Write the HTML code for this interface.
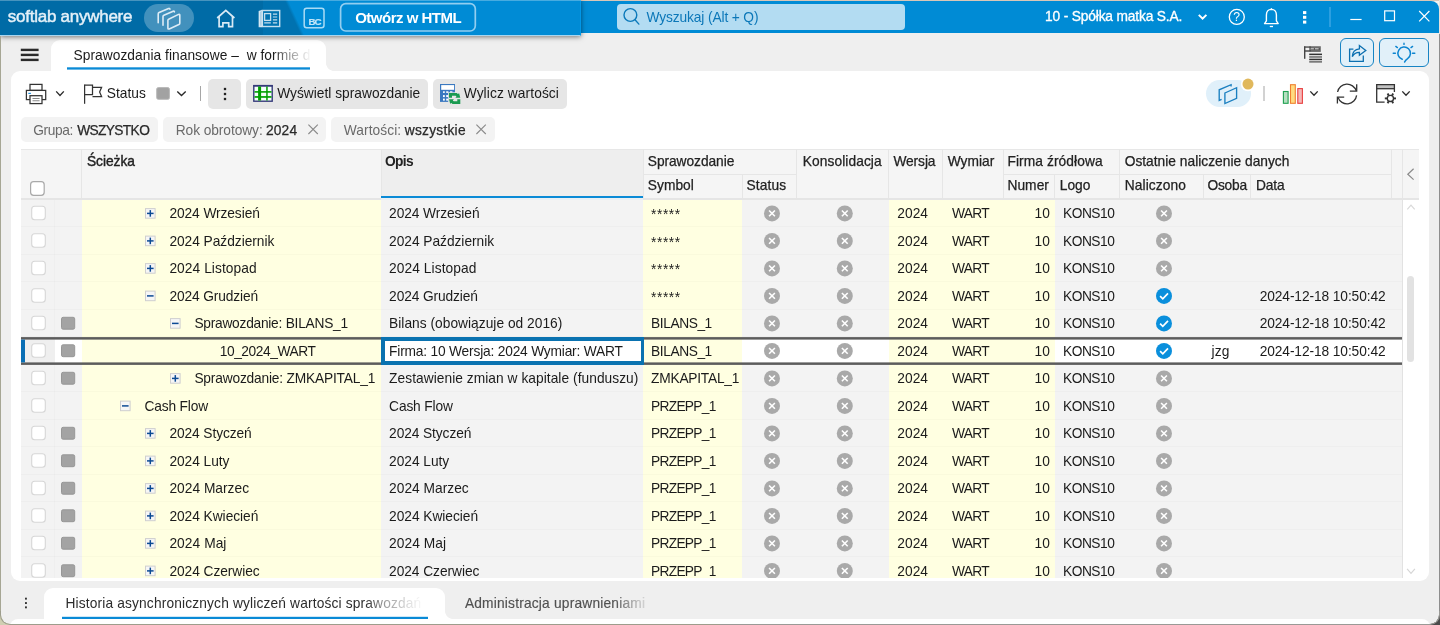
<!DOCTYPE html>
<html><head><meta charset="utf-8"><title>Sprawozdania finansowe</title>
<style>
html,body{margin:0;padding:0}
body{width:1440px;height:625px;overflow:hidden;position:relative;background:#efefef;font-family:"Liberation Sans",sans-serif;}
div{position:absolute;}
span{position:absolute;white-space:pre;line-height:normal;}
svg{position:absolute;left:0;top:0;}
</style></head><body>
<div style="left:1425px;top:0;width:15px;height:12px;background:#f2f0ee"></div>
<div style="left:0px;top:0px;width:1440px;height:1px;background:#d9c7b8;"></div>
<div style="left:0px;top:1px;width:1439px;height:32.3px;background:#008bd5;border-top-right-radius:8px;"></div>
<div style="left:0px;top:0px;width:579.5px;height:34.8px;background:linear-gradient(90deg,#006ba6 0,#006ba6 262.5px,rgba(0,107,166,0) 263.5px),linear-gradient(65deg,#0072b0 0,#0072b0 272.8px,#008bd5 275.8px,#008bd5 100%);box-shadow:0 1px 5px 0 rgba(0,0,0,.5);border-bottom:1.6px solid #a9d6f0;border-right:1.3px solid #0097e8;box-sizing:content-box;z-index:3;"></div>
<div style="left:0;top:0;width:581px;height:1px;background:rgba(255,255,255,.28);z-index:4"></div>
<div style="left:144.3px;top:4.2px;width:49.5px;height:27.4px;background:rgba(255,255,255,.26);border-radius:14px;z-index:4;"></div>
<div style="left:617px;top:4px;width:288px;height:26px;background:#b3dcf2;border-radius:4px;"></div>
<div style="left:1329.3px;top:7px;width:1.7px;height:20px;background:#2c9fe0;"></div>
<div style="left:0px;top:36px;width:1px;height:589px;background:#a6a694;z-index:9;"></div>
<div style="left:1439px;top:0px;width:1px;height:34px;background:#e6e1dc;z-index:9;"></div>
<div style="left:1439px;top:34px;width:1px;height:591px;background:#8e8e8e;z-index:9;"></div>
<div style="left:51px;top:39.8px;width:275px;height:31.5px;background:#fff;border-radius:9px 9px 0 0;"></div>
<div style="left:326px;top:63.3px;width:8px;height:8px;background:radial-gradient(circle at 100% 0,#efefef 7.6px,#fff 8.2px)"></div>
<div style="left:11px;top:71px;width:1418px;height:510px;background:#fff;border-radius:9px;"></div>
<div style="left:43.7px;top:588px;width:401.5px;height:31.3px;background:#fff;border-radius:9px 9px 0 0;"></div>
<div style="left:445.2px;top:611.3px;width:8px;height:8px;background:radial-gradient(circle at 100% 0,#efefef 7.6px,#fff 8.2px)"></div>
<div style="left:10px;top:619.2px;width:1420px;height:8px;background:#fff;border-radius:9px 9px 0 0;"></div>
<div style="left:0;top:611px;width:720px;height:14px;z-index:10;background:transparent;overflow:hidden"><div style="position:absolute;left:1px;top:-20px;width:1437.6px;height:32.6px;border-radius:0 0 9px 9px;box-shadow:0 0 0 1px #9d9d8c,0 0 0 30px #cfcfb2"></div></div>
<div style="left:720px;top:611px;width:720px;height:14px;z-index:10;background:transparent;overflow:hidden"><div style="position:absolute;left:-719px;top:-20px;width:1437.6px;height:32.6px;border-radius:0 0 9px 9px;box-shadow:0 0 0 1px #9a9a96,0 0 0 30px #4a4a4a"></div></div>
<div style="left:208.2px;top:79.3px;width:32.6px;height:29.4px;background:#e6e6e6;border-radius:5px;"></div>
<div style="left:246px;top:79.3px;width:182px;height:29.6px;background:#e6e6e6;border-radius:5px;"></div>
<div style="left:433px;top:79.3px;width:134px;height:29.6px;background:#e6e6e6;border-radius:5px;"></div>
<div style="left:200px;top:86.2px;width:1px;height:14.6px;background:#a6a6a6;"></div>
<div style="left:21.2px;top:117px;width:136.8px;height:25px;background:#f3f3f3;border-radius:5px;"></div>
<div style="left:163px;top:117px;width:162.8px;height:25px;background:#f3f3f3;border-radius:5px;"></div>
<div style="left:331.2px;top:117px;width:163.8px;height:25px;background:#f3f3f3;border-radius:5px;"></div>
<div style="left:1205.9px;top:79.9px;width:45.1px;height:27px;background:#e0f0fa;border-radius:14px;"></div>
<div style="left:1263.3px;top:86px;width:1.4px;height:15px;background:#d2d2d2;"></div>
<div style="left:1339.9px;top:38.1px;width:34.1px;height:28.7px;background:#e1f0f9;border:1.1px solid #1784c4;border-radius:6px;box-sizing:border-box;"></div>
<div style="left:1378.9px;top:38.1px;width:50.1px;height:28.7px;background:#e1f0f9;border:1.1px solid #1784c4;border-radius:6px;box-sizing:border-box;"></div>
<div style="left:21px;top:149.3px;width:1398px;height:49.9px;background:#f5f5f5;border-top:1px solid #e7e7e7;box-sizing:border-box;"></div>
<div style="left:381px;top:150.3px;width:262px;height:48.9px;background:#eeeeee;"></div>
<div style="left:21px;top:198px;width:1398px;height:2px;background:#e5e5e5;z-index:2;"></div>
<div style="left:381px;top:196px;width:262px;height:2px;background:#0a8ad6;z-index:2;"></div>
<div style="left:381px;top:198px;width:262px;height:2px;background:#eaf0f4;z-index:2;"></div>
<div style="left:81px;top:149.3px;width:1px;height:49.9px;background:#e6e6e6;"></div>
<div style="left:380.5px;top:149.3px;width:1px;height:49.9px;background:#e6e6e6;"></div>
<div style="left:642.5px;top:149.3px;width:1px;height:49.9px;background:#e6e6e6;"></div>
<div style="left:741.5px;top:174.4px;width:1px;height:24.8px;background:#e6e6e6;"></div>
<div style="left:795.9px;top:149.3px;width:1px;height:49.9px;background:#e6e6e6;"></div>
<div style="left:888.1px;top:149.3px;width:1px;height:49.9px;background:#e6e6e6;"></div>
<div style="left:941.5px;top:149.3px;width:1px;height:49.9px;background:#e6e6e6;"></div>
<div style="left:1002.8px;top:149.3px;width:1px;height:49.9px;background:#e6e6e6;"></div>
<div style="left:1054.2px;top:174.4px;width:1px;height:24.8px;background:#e6e6e6;"></div>
<div style="left:1119.2px;top:149.3px;width:1px;height:49.9px;background:#e6e6e6;"></div>
<div style="left:1202.5px;top:174.4px;width:1px;height:24.8px;background:#e6e6e6;"></div>
<div style="left:1249.8px;top:174.4px;width:1px;height:24.8px;background:#e6e6e6;"></div>
<div style="left:1391px;top:149.3px;width:1px;height:49.9px;background:#e6e6e6;"></div>
<div style="left:1401.9px;top:149.3px;width:1px;height:49.9px;background:#e6e6e6;"></div>
<div style="left:643px;top:173.9px;width:153.4px;height:1px;background:#e6e6e6;"></div>
<div style="left:1003.3px;top:173.9px;width:116.4px;height:1px;background:#e6e6e6;"></div>
<div style="left:1119.7px;top:173.9px;width:271.8px;height:1px;background:#e6e6e6;"></div>
<div style="left:21px;top:199px;width:1381.4px;height:378.6px;overflow:hidden;background:none"><div style="left:0px;top:0px;width:1381.4px;height:385px;background:#f3f3f3;"></div><div style="left:60.5px;top:0px;width:299.5px;height:385px;background:#ffffe1;"></div><div style="left:622px;top:0px;width:99px;height:385px;background:#ffffe1;"></div><div style="left:867.6px;top:0px;width:53.4px;height:385px;background:#ffffe1;"></div><div style="left:921px;top:0px;width:61.3px;height:385px;background:#ffffe1;"></div><div style="left:982.3px;top:0px;width:51.4px;height:385px;background:#ffffe1;"></div><div style="left:0px;top:27px;width:1381.4px;height:1px;background:rgba(0,0,0,.018);"></div><div style="left:0px;top:54.5px;width:1381.4px;height:1px;background:rgba(0,0,0,.018);"></div><div style="left:0px;top:82px;width:1381.4px;height:1px;background:rgba(0,0,0,.018);"></div><div style="left:0px;top:109.5px;width:1381.4px;height:1px;background:rgba(0,0,0,.018);"></div><div style="left:0px;top:137px;width:1381.4px;height:1px;background:rgba(0,0,0,.018);"></div><div style="left:0px;top:164.5px;width:1381.4px;height:1px;background:rgba(0,0,0,.018);"></div><div style="left:0px;top:192px;width:1381.4px;height:1px;background:rgba(0,0,0,.018);"></div><div style="left:0px;top:219.5px;width:1381.4px;height:1px;background:rgba(0,0,0,.018);"></div><div style="left:0px;top:247px;width:1381.4px;height:1px;background:rgba(0,0,0,.018);"></div><div style="left:0px;top:274.5px;width:1381.4px;height:1px;background:rgba(0,0,0,.018);"></div><div style="left:0px;top:302px;width:1381.4px;height:1px;background:rgba(0,0,0,.018);"></div><div style="left:0px;top:329.5px;width:1381.4px;height:1px;background:rgba(0,0,0,.018);"></div><div style="left:0px;top:357px;width:1381.4px;height:1px;background:rgba(0,0,0,.018);"></div><div style="left:33.2px;top:0px;width:1px;height:385px;background:rgba(0,0,0,.015);"></div><div style="left:0px;top:137.5px;width:1381.4px;height:27.5px;background:#fff;"></div><div style="left:0px;top:137.5px;width:33.7px;height:27.5px;background:#efefef;"></div><div style="left:60.5px;top:137.5px;width:299.5px;height:27.5px;background:#ffffe1;"></div><div style="left:622px;top:137.5px;width:99px;height:27.5px;background:#ffffe1;"></div><div style="left:867.6px;top:137.5px;width:53.4px;height:27.5px;background:#ffffe1;"></div><div style="left:921px;top:137.5px;width:61.3px;height:27.5px;background:#ffffe1;"></div><div style="left:982.3px;top:137.5px;width:51.4px;height:27.5px;background:#ffffe1;"></div><svg width="1381.4" height="400" viewBox="21 199 1381.4 400"><rect x="21" y="337.1" width="1381.4" height="2.5" fill="#5c5c5c"/><rect x="21" y="362.4" width="1381.4" height="2.5" fill="#5c5c5c"/><rect x="21" y="339.6" width="4" height="22.8" fill="#0a6fb5"/></svg><div style="left:360px;top:138px;width:263px;height:28px;background:#fff;border:solid #0a72b0;border-width:4px 3px 4px 4px;box-sizing:border-box;"></div></div>
<div style="left:1402px;top:199.2px;width:0.9px;height:378.4px;background:#e2e2e2;"></div>
<div style="left:1407.2px;top:276px;width:7.3px;height:86px;background:#e2e2e2;border-radius:4px;"></div>
<svg width="1440" height="625" viewBox="0 0 1440 625" style="z-index:6"><g stroke="#dcecf6" stroke-width="1.6" fill="none" stroke-linejoin="round" stroke-linecap="round"><path d="M168.6 19.3 L178.6 14.4 Q179.8 13.9 179.8 15.2 L179.8 23.2 Q179.8 24.2 178.9 24.6 L169.2 28.9 Q167.9 29.4 167.9 28.1 L167.9 20.4 Q167.9 19.6 168.6 19.3Z"/><path d="M163 25.3 L163 16.6 Q163 15.6 163.9 15.2 L173.2 11.2 Q174.3 10.9 174.4 11.9"/><path d="M158.2 22.7 L158.2 14 Q158.2 13 159.1 12.6 L168.6 8.5 Q169.7 8.2 169.9 9.2"/></g><g stroke="#d9eaf5" stroke-width="1.7" fill="none" stroke-linejoin="miter"><path d="M217.2 18 L225.8 10.4 L234.4 18"/><path d="M219.1 16.6 L219.1 26.7 L222.9 26.7 L222.9 22.9 L228.7 22.9 L228.7 26.7 L232.5 26.7 L232.5 16.6"/></g><g stroke="#e6f2f9" fill="none" stroke-width="1.4" opacity=".85"><rect x="262.4" y="10.5" width="17.3" height="16"/><path d="M262.4 10.5 L259.3 11.6 L259.3 26.5 L262.4 26.5" /><rect x="264.6" y="13.6" width="6" height="6.8" stroke-width="1.3"/><path d="M272.9 14.2 H277.2 M272.9 17 H277.2 M272.9 19.8 H277.2 M264.2 22.8 H270.8 M272.9 22.8 H277.2" stroke-width="1.2"/></g><rect x="259.3" y="11.4" width="3.1" height="15.2" fill="#e6f2f9" opacity=".75"/><rect x="340.6" y="3.6" width="134.7" height="27.4" rx="5.2" stroke="#92cef0" stroke-width="1.7" fill="none"/><rect x="304.2" y="8.3" width="19.8" height="19.5" rx="2.5" stroke="#a9dbf5" stroke-width="1.5" fill="none"/><g stroke="#0b79ba" stroke-width="1.4" fill="none" stroke-linecap="round"><circle cx="630.4" cy="15" r="6.4"/><path d="M635 19.8 L638.9 24.1"/></g><path d="M1198.8 14.9 L1202.6 18.7 L1206.4 14.9" stroke="#fff" stroke-width="2" fill="none"/><circle cx="1236.8" cy="16.9" r="7.5" stroke="#fff" stroke-width="1.3" fill="none"/><g stroke="#fff" stroke-width="1.4" fill="none" stroke-linejoin="round"><path d="M1264.6 23.6 H1278.2 L1276.4 20.8 V15 Q1276.4 9.6 1271.4 9.4 Q1266.4 9.6 1266.4 15 V20.8 Z"/><path d="M1269.8 26.5 H1273" stroke-width="1.3"/><path d="M1271.4 9.4 V8.2"/></g><rect x="1303" y="11.1" width="3.3" height="3" fill="#fff"/><rect x="1303" y="15.8" width="3.3" height="3" fill="#fff"/><rect x="1303" y="20.6" width="3.3" height="3" fill="#fff"/><path d="M1350.3 19.5 H1361.6" stroke="#fff" stroke-width="1.2"/><rect x="1384.7" y="10.9" width="9.8" height="9.8" stroke="#fff" stroke-width="1.2" fill="none"/><path d="M1419.2 11 L1429.4 21.3 M1429.4 11 L1419.2 21.3" stroke="#fff" stroke-width="1.2"/><rect x="67" y="67.3" width="243" height="2.3" fill="#0a8ad6"/><rect x="62" y="616.8" width="366" height="2.2" fill="#0a8ad6"/><rect x="20.8" y="48.699999999999996" width="17.8" height="2.4" fill="#2b2b2b"/><rect x="20.8" y="53.699999999999996" width="17.8" height="2.4" fill="#2b2b2b"/><rect x="20.8" y="58.699999999999996" width="17.8" height="2.4" fill="#2b2b2b"/><g fill="#444"><rect x="1304" y="46.4" width="16.8" height="1.3"/><rect x="1304" y="46.4" width="1.4" height="12.4"/><rect x="1304" y="50.3" width="16.8" height="1.4"/><rect x="1309.4" y="46.4" width="1.3" height="5"/><rect x="1310.7" y="47.7" width="10" height="2.6" fill="#555"/><rect x="1310.9" y="48.3" width="3" height="1" fill="#ddd"/><rect x="1315" y="48.3" width="3.6" height="1" fill="#ddd"/><rect x="1309.2" y="53.6" width="12.8" height="1.5" fill="#333"/><rect x="1309.2" y="56.1" width="12.8" height="1.7" fill="#7a7a7a"/><rect x="1309.2" y="58.7" width="12.8" height="1.5" fill="#333"/><rect x="1309.2" y="61" width="12.8" height="1.7" fill="#7a7a7a"/></g><g stroke="#0b6fb0" stroke-width="1.3" fill="none"><path d="M1353.4 49.1 H1349.6 V61.3 H1363.3 V55.4"/><path d="M1352.3 56.6 Q1352.6 49.4 1359.4 48.8 V45.6 L1365.8 50.4 L1359.4 55.3 V52.3 Q1354.6 52.2 1352.3 56.6Z" stroke-linejoin="miter"/></g><g stroke="#0b84d0" stroke-width="1.5" fill="none" stroke-linecap="round"><path d="M1402.2 59.3 A6.3 6.3 0 1 1 1407.6 58.6 Q1405.4 60 1404.6 62.1"/><path d="M1404 43.2 V44.4 M1393.2 53.3 H1395.4 M1412.5 53.3 H1414.8 M1395.8 46.4 L1397.4 47.6 M1412.6 46.4 L1411 47.6" stroke-width="1.4"/></g><g stroke="#333" stroke-width="1.25" fill="#fff"><rect x="30" y="84.4" width="12" height="6"/><rect x="26.4" y="90.4" width="19.3" height="9.2"/><rect x="30" y="95.7" width="12" height="7.9"/><path d="M32.5 98.5 H39.6 M32.5 100.8 H39.6" stroke="#8a8a8a" stroke-width="1.1"/></g><rect x="28.3" y="92.8" width="2.6" height="1.2" fill="#1a8fe0"/><path d="M56.2 91.4 L60.0 95.4 L63.8 91.4" stroke="#2a2a2a" stroke-width="1.35" fill="none"/><path d="M177.3 91.4 L181.5 95.6 L185.7 91.4" stroke="#2a2a2a" stroke-width="1.35" fill="none"/><path d="M1310.3 91.4 L1314.0 95.3 L1317.7 91.4" stroke="#2a2a2a" stroke-width="1.35" fill="none"/><path d="M1402.3 91.4 L1406.0 95.3 L1409.7 91.4" stroke="#2a2a2a" stroke-width="1.35" fill="none"/><g stroke="#333" stroke-width="1.25" fill="none"><path d="M84.6 84.5 V103.8"/><path d="M84.6 85.1 H92.5 V94.5 H84.6"/><path d="M92.5 87.3 H101.6 L99.6 92 L101.6 96.6 H92.5"/></g><rect x="156.7" y="87.6" width="12.7" height="11.7" rx="1.6" fill="#a2a2a2" stroke="#b8b8b8" stroke-width="1"/><rect x="223.85" y="87.85" width="2.3" height="2.3" fill="#222"/><rect x="223.85" y="92.85" width="2.3" height="2.3" fill="#222"/><rect x="223.85" y="97.85" width="2.3" height="2.3" fill="#222"/><rect x="253.8" y="85.8" width="18.4" height="15.4" fill="#f4fffa" stroke="#363a7a" stroke-width="1.4"/><rect x="253.2" y="84.9" width="19.6" height="1.6" fill="#363a7a"/><g fill="#00a000"><rect x="258.1" y="86.5" width="3" height="14"/><rect x="266.2" y="86.5" width="1.5" height="14"/><rect x="254.5" y="91.1" width="17" height="1.6"/><rect x="254.5" y="96.1" width="17" height="1.7"/></g><rect x="440" y="84" width="15" height="17.9" fill="#3a78c0"/><rect x="441.2" y="85.1" width="12.9" height="4.7" fill="#fff"/><g fill="#fff"><rect x="443" y="91.3" width="1.8" height="1.6"/><rect x="446.2" y="91.3" width="2.2" height="1.6"/><rect x="450" y="91.3" width="2.4" height="1.3"/><rect x="443" y="95.1" width="1.8" height="2"/><rect x="446.2" y="95.1" width="2.2" height="2"/><rect x="443" y="98.6" width="1.8" height="2"/><rect x="446.2" y="98.6" width="2.2" height="2"/></g><rect x="448.2" y="92.3" width="12.6" height="12.2" fill="#e6e6e6"/><g fill="#1a9a50" stroke="none"><path d="M449 93 H456.8 L457.9 94.1 L459.1 93.2 L460.3 97.7 H455.4 L456.5 96.6 L455.6 95.7 H452 V97.7 H449Z"/><path d="M460.3 104 H452.5 L451.4 102.9 L450.2 103.8 L449 99.3 H453.9 L452.8 100.4 L453.7 101.3 H457.3 V99.3 H460.3Z"/></g><path d="M308.4 124.6 L317.8 134 M317.8 124.6 L308.4 134" stroke="#8a8a8a" stroke-width="1.1"/><path d="M476.4 124.6 L485.8 134 M485.8 124.6 L476.4 134" stroke="#8a8a8a" stroke-width="1.1"/><g stroke="#1a7fc0" stroke-width="1.35" fill="none" stroke-linejoin="miter"><path d="M1224.9 93 L1236.6 87.7 V98.3 L1224.9 103.5Z"/><path d="M1221.6 99.4 L1219.2 100.4 V89.8 L1231.1 84.7 V86.6"/></g><circle cx="1248" cy="84.1" r="7.2" fill="#fff"/><circle cx="1248" cy="84.1" r="5.5" fill="#e0b85c"/><rect x="1283.4" y="91.5" width="4.7" height="11.8" fill="#b5dfc0" stroke="#1ea050" stroke-width="1.1"/><rect x="1290.5" y="84.7" width="4.8" height="18.6" fill="#ffdc80" stroke="#f08030" stroke-width="1.1"/><rect x="1297.8" y="88.6" width="4.6" height="14.7" fill="#f5b8b8" stroke="#e84040" stroke-width="1.1"/><g stroke="#333" stroke-width="1.3" fill="none"><path d="M1337.6 92 A9.6 9.6 0 0 1 1356.2 90.9"/><path d="M1356.7 84.2 V91.1 H1349.8"/><path d="M1356.6 95.4 A9.6 9.6 0 0 1 1338 97.4"/><path d="M1337.4 103.6 V97.2 H1344.2"/></g><rect x="1376.6" y="84.6" width="17.8" height="4" fill="#c2c2c2"/><g stroke="#333" stroke-width="1.3" fill="none"><path d="M1384.6 102.1 H1376.7 V84.7 H1394.4 V92"/><path d="M1376.7 88.7 H1394.4"/><circle cx="1390.4" cy="98.4" r="3.1"/></g><g stroke="#333" stroke-width="1.9"><path d="M1393.80 98.40 L1396.00 98.40"/><path d="M1387.00 98.40 L1384.80 98.40"/><path d="M1392.10 101.34 L1393.20 103.25"/><path d="M1388.70 101.34 L1387.60 103.25"/><path d="M1392.10 95.46 L1393.20 93.55"/><path d="M1388.70 95.46 L1387.60 93.55"/></g><rect x="30.6" y="181.7" width="13.6" height="13.6" rx="3" fill="#fff" stroke="#a9a9a9" stroke-width="1.2"/><path d="M1413.6 168.8 L1407.8 174.2 L1413.6 179.6" stroke="#8a8a8a" stroke-width="1.2" fill="none"/><path d="M1407.3 209.4 L1411 205.2 L1414.7 209.4" stroke="#d9d9d9" stroke-width="1.2" fill="none"/><path d="M1407.1 568.8 L1411 573.4 L1414.9 568.8" stroke="#d6d6d6" stroke-width="1.2" fill="none"/><rect x="25" y="597.7" width="1.9" height="1.9" fill="#333"/><rect x="25" y="602.1" width="1.9" height="1.9" fill="#333"/><rect x="25" y="606.4" width="1.9" height="1.9" fill="#333"/></svg>
<div style="left:21px;top:199px;width:1381.4px;height:378.6px;overflow:hidden;z-index:7;will-change:transform"><svg width="1381.4" height="400" viewBox="21 199 1381.4 400"><rect x="31.7" y="206.2" width="13.6" height="13.6" rx="3" fill="#fff" stroke="#d6d6d6" stroke-width="1.1"/><rect x="145.5" y="208.6" width="9.6" height="9.6" fill="#f6f6f6" stroke="#cfcfcf" stroke-width="1"/><path d="M147 213.4 H153.6" stroke="#0c4a94" stroke-width="1.5"/><path d="M150.3 210.1 V216.70000000000002" stroke="#0c4a94" stroke-width="1.5"/><circle cx="772" cy="213.4" r="8" fill="#a9a9a9"/><path d="M769.1 210.5 L774.9 216.3 M774.9 210.5 L769.1 216.3" stroke="#fff" stroke-width="1.6"/><circle cx="844.8" cy="213.4" r="8" fill="#a9a9a9"/><path d="M841.9 210.5 L847.6999999999999 216.3 M847.6999999999999 210.5 L841.9 216.3" stroke="#fff" stroke-width="1.6"/><circle cx="1164" cy="213.4" r="8" fill="#a9a9a9"/><path d="M1161.1 210.5 L1166.9 216.3 M1166.9 210.5 L1161.1 216.3" stroke="#fff" stroke-width="1.6"/><rect x="31.7" y="233.7" width="13.6" height="13.6" rx="3" fill="#fff" stroke="#d6d6d6" stroke-width="1.1"/><rect x="145.5" y="236.1" width="9.6" height="9.6" fill="#f6f6f6" stroke="#cfcfcf" stroke-width="1"/><path d="M147 240.9 H153.6" stroke="#0c4a94" stroke-width="1.5"/><path d="M150.3 237.6 V244.20000000000002" stroke="#0c4a94" stroke-width="1.5"/><circle cx="772" cy="240.9" r="8" fill="#a9a9a9"/><path d="M769.1 238.0 L774.9 243.8 M774.9 238.0 L769.1 243.8" stroke="#fff" stroke-width="1.6"/><circle cx="844.8" cy="240.9" r="8" fill="#a9a9a9"/><path d="M841.9 238.0 L847.6999999999999 243.8 M847.6999999999999 238.0 L841.9 243.8" stroke="#fff" stroke-width="1.6"/><circle cx="1164" cy="240.9" r="8" fill="#a9a9a9"/><path d="M1161.1 238.0 L1166.9 243.8 M1166.9 238.0 L1161.1 243.8" stroke="#fff" stroke-width="1.6"/><rect x="31.7" y="261.2" width="13.6" height="13.6" rx="3" fill="#fff" stroke="#d6d6d6" stroke-width="1.1"/><rect x="145.5" y="263.59999999999997" width="9.6" height="9.6" fill="#f6f6f6" stroke="#cfcfcf" stroke-width="1"/><path d="M147 268.4 H153.6" stroke="#0c4a94" stroke-width="1.5"/><path d="M150.3 265.09999999999997 V271.7" stroke="#0c4a94" stroke-width="1.5"/><circle cx="772" cy="268.4" r="8" fill="#a9a9a9"/><path d="M769.1 265.5 L774.9 271.29999999999995 M774.9 265.5 L769.1 271.29999999999995" stroke="#fff" stroke-width="1.6"/><circle cx="844.8" cy="268.4" r="8" fill="#a9a9a9"/><path d="M841.9 265.5 L847.6999999999999 271.29999999999995 M847.6999999999999 265.5 L841.9 271.29999999999995" stroke="#fff" stroke-width="1.6"/><circle cx="1164" cy="268.4" r="8" fill="#a9a9a9"/><path d="M1161.1 265.5 L1166.9 271.29999999999995 M1166.9 265.5 L1161.1 271.29999999999995" stroke="#fff" stroke-width="1.6"/><rect x="31.7" y="288.7" width="13.6" height="13.6" rx="3" fill="#fff" stroke="#d6d6d6" stroke-width="1.1"/><rect x="145.5" y="291.09999999999997" width="9.6" height="9.6" fill="#f6f6f6" stroke="#cfcfcf" stroke-width="1"/><path d="M147 295.9 H153.6" stroke="#0c4a94" stroke-width="1.5"/><circle cx="772" cy="295.9" r="8" fill="#a9a9a9"/><path d="M769.1 293.0 L774.9 298.79999999999995 M774.9 293.0 L769.1 298.79999999999995" stroke="#fff" stroke-width="1.6"/><circle cx="844.8" cy="295.9" r="8" fill="#a9a9a9"/><path d="M841.9 293.0 L847.6999999999999 298.79999999999995 M847.6999999999999 293.0 L841.9 298.79999999999995" stroke="#fff" stroke-width="1.6"/><circle cx="1164" cy="295.9" r="8" fill="#0a8fdc"/><path d="M1160.1 296.09999999999997 L1162.8 298.79999999999995 L1168 293.29999999999995" stroke="#fff" stroke-width="1.7" fill="none"/><rect x="31.7" y="316.2" width="13.6" height="13.6" rx="3" fill="#fff" stroke="#d6d6d6" stroke-width="1.1"/><rect x="61.5" y="317.29999999999995" width="13.2" height="11.9" rx="1.6" fill="#a3a3a3" stroke="#979797" stroke-width="1"/><rect x="170.5" y="318.59999999999997" width="9.6" height="9.6" fill="#f6f6f6" stroke="#cfcfcf" stroke-width="1"/><path d="M172 323.4 H178.6" stroke="#0c4a94" stroke-width="1.5"/><circle cx="772" cy="323.4" r="8" fill="#a9a9a9"/><path d="M769.1 320.5 L774.9 326.29999999999995 M774.9 320.5 L769.1 326.29999999999995" stroke="#fff" stroke-width="1.6"/><circle cx="844.8" cy="323.4" r="8" fill="#a9a9a9"/><path d="M841.9 320.5 L847.6999999999999 326.29999999999995 M847.6999999999999 320.5 L841.9 326.29999999999995" stroke="#fff" stroke-width="1.6"/><circle cx="1164" cy="323.4" r="8" fill="#0a8fdc"/><path d="M1160.1 323.59999999999997 L1162.8 326.29999999999995 L1168 320.79999999999995" stroke="#fff" stroke-width="1.7" fill="none"/><rect x="31.7" y="343.7" width="13.6" height="13.6" rx="3" fill="#fff" stroke="#d6d6d6" stroke-width="1.1"/><rect x="61.5" y="344.79999999999995" width="13.2" height="11.9" rx="1.6" fill="#a3a3a3" stroke="#979797" stroke-width="1"/><circle cx="772" cy="350.9" r="8" fill="#a9a9a9"/><path d="M769.1 348.0 L774.9 353.79999999999995 M774.9 348.0 L769.1 353.79999999999995" stroke="#fff" stroke-width="1.6"/><circle cx="844.8" cy="350.9" r="8" fill="#a9a9a9"/><path d="M841.9 348.0 L847.6999999999999 353.79999999999995 M847.6999999999999 348.0 L841.9 353.79999999999995" stroke="#fff" stroke-width="1.6"/><circle cx="1164" cy="350.9" r="8" fill="#0a8fdc"/><path d="M1160.1 351.09999999999997 L1162.8 353.79999999999995 L1168 348.29999999999995" stroke="#fff" stroke-width="1.7" fill="none"/><rect x="31.7" y="371.2" width="13.6" height="13.6" rx="3" fill="#fff" stroke="#d6d6d6" stroke-width="1.1"/><rect x="61.5" y="372.29999999999995" width="13.2" height="11.9" rx="1.6" fill="#a3a3a3" stroke="#979797" stroke-width="1"/><rect x="170.5" y="373.59999999999997" width="9.6" height="9.6" fill="#f6f6f6" stroke="#cfcfcf" stroke-width="1"/><path d="M172 378.4 H178.6" stroke="#0c4a94" stroke-width="1.5"/><path d="M175.3 375.09999999999997 V381.7" stroke="#0c4a94" stroke-width="1.5"/><circle cx="772" cy="378.4" r="8" fill="#a9a9a9"/><path d="M769.1 375.5 L774.9 381.29999999999995 M774.9 375.5 L769.1 381.29999999999995" stroke="#fff" stroke-width="1.6"/><circle cx="844.8" cy="378.4" r="8" fill="#a9a9a9"/><path d="M841.9 375.5 L847.6999999999999 381.29999999999995 M847.6999999999999 375.5 L841.9 381.29999999999995" stroke="#fff" stroke-width="1.6"/><circle cx="1164" cy="378.4" r="8" fill="#a9a9a9"/><path d="M1161.1 375.5 L1166.9 381.29999999999995 M1166.9 375.5 L1161.1 381.29999999999995" stroke="#fff" stroke-width="1.6"/><rect x="31.7" y="398.7" width="13.6" height="13.6" rx="3" fill="#fff" stroke="#d6d6d6" stroke-width="1.1"/><rect x="120.5" y="401.09999999999997" width="9.6" height="9.6" fill="#f6f6f6" stroke="#cfcfcf" stroke-width="1"/><path d="M122 405.9 H128.6" stroke="#0c4a94" stroke-width="1.5"/><circle cx="772" cy="405.9" r="8" fill="#a9a9a9"/><path d="M769.1 403.0 L774.9 408.79999999999995 M774.9 403.0 L769.1 408.79999999999995" stroke="#fff" stroke-width="1.6"/><circle cx="844.8" cy="405.9" r="8" fill="#a9a9a9"/><path d="M841.9 403.0 L847.6999999999999 408.79999999999995 M847.6999999999999 403.0 L841.9 408.79999999999995" stroke="#fff" stroke-width="1.6"/><circle cx="1164" cy="405.9" r="8" fill="#a9a9a9"/><path d="M1161.1 403.0 L1166.9 408.79999999999995 M1166.9 403.0 L1161.1 408.79999999999995" stroke="#fff" stroke-width="1.6"/><rect x="31.7" y="426.2" width="13.6" height="13.6" rx="3" fill="#fff" stroke="#d6d6d6" stroke-width="1.1"/><rect x="61.5" y="427.29999999999995" width="13.2" height="11.9" rx="1.6" fill="#a3a3a3" stroke="#979797" stroke-width="1"/><rect x="145.5" y="428.59999999999997" width="9.6" height="9.6" fill="#f6f6f6" stroke="#cfcfcf" stroke-width="1"/><path d="M147 433.4 H153.6" stroke="#0c4a94" stroke-width="1.5"/><path d="M150.3 430.09999999999997 V436.7" stroke="#0c4a94" stroke-width="1.5"/><circle cx="772" cy="433.4" r="8" fill="#a9a9a9"/><path d="M769.1 430.5 L774.9 436.29999999999995 M774.9 430.5 L769.1 436.29999999999995" stroke="#fff" stroke-width="1.6"/><circle cx="844.8" cy="433.4" r="8" fill="#a9a9a9"/><path d="M841.9 430.5 L847.6999999999999 436.29999999999995 M847.6999999999999 430.5 L841.9 436.29999999999995" stroke="#fff" stroke-width="1.6"/><circle cx="1164" cy="433.4" r="8" fill="#a9a9a9"/><path d="M1161.1 430.5 L1166.9 436.29999999999995 M1166.9 430.5 L1161.1 436.29999999999995" stroke="#fff" stroke-width="1.6"/><rect x="31.7" y="453.7" width="13.6" height="13.6" rx="3" fill="#fff" stroke="#d6d6d6" stroke-width="1.1"/><rect x="61.5" y="454.79999999999995" width="13.2" height="11.9" rx="1.6" fill="#a3a3a3" stroke="#979797" stroke-width="1"/><rect x="145.5" y="456.09999999999997" width="9.6" height="9.6" fill="#f6f6f6" stroke="#cfcfcf" stroke-width="1"/><path d="M147 460.9 H153.6" stroke="#0c4a94" stroke-width="1.5"/><path d="M150.3 457.59999999999997 V464.2" stroke="#0c4a94" stroke-width="1.5"/><circle cx="772" cy="460.9" r="8" fill="#a9a9a9"/><path d="M769.1 458.0 L774.9 463.79999999999995 M774.9 458.0 L769.1 463.79999999999995" stroke="#fff" stroke-width="1.6"/><circle cx="844.8" cy="460.9" r="8" fill="#a9a9a9"/><path d="M841.9 458.0 L847.6999999999999 463.79999999999995 M847.6999999999999 458.0 L841.9 463.79999999999995" stroke="#fff" stroke-width="1.6"/><circle cx="1164" cy="460.9" r="8" fill="#a9a9a9"/><path d="M1161.1 458.0 L1166.9 463.79999999999995 M1166.9 458.0 L1161.1 463.79999999999995" stroke="#fff" stroke-width="1.6"/><rect x="31.7" y="481.2" width="13.6" height="13.6" rx="3" fill="#fff" stroke="#d6d6d6" stroke-width="1.1"/><rect x="61.5" y="482.29999999999995" width="13.2" height="11.9" rx="1.6" fill="#a3a3a3" stroke="#979797" stroke-width="1"/><rect x="145.5" y="483.59999999999997" width="9.6" height="9.6" fill="#f6f6f6" stroke="#cfcfcf" stroke-width="1"/><path d="M147 488.4 H153.6" stroke="#0c4a94" stroke-width="1.5"/><path d="M150.3 485.09999999999997 V491.7" stroke="#0c4a94" stroke-width="1.5"/><circle cx="772" cy="488.4" r="8" fill="#a9a9a9"/><path d="M769.1 485.5 L774.9 491.29999999999995 M774.9 485.5 L769.1 491.29999999999995" stroke="#fff" stroke-width="1.6"/><circle cx="844.8" cy="488.4" r="8" fill="#a9a9a9"/><path d="M841.9 485.5 L847.6999999999999 491.29999999999995 M847.6999999999999 485.5 L841.9 491.29999999999995" stroke="#fff" stroke-width="1.6"/><circle cx="1164" cy="488.4" r="8" fill="#a9a9a9"/><path d="M1161.1 485.5 L1166.9 491.29999999999995 M1166.9 485.5 L1161.1 491.29999999999995" stroke="#fff" stroke-width="1.6"/><rect x="31.7" y="508.7" width="13.6" height="13.6" rx="3" fill="#fff" stroke="#d6d6d6" stroke-width="1.1"/><rect x="61.5" y="509.79999999999995" width="13.2" height="11.9" rx="1.6" fill="#a3a3a3" stroke="#979797" stroke-width="1"/><rect x="145.5" y="511.09999999999997" width="9.6" height="9.6" fill="#f6f6f6" stroke="#cfcfcf" stroke-width="1"/><path d="M147 515.9 H153.6" stroke="#0c4a94" stroke-width="1.5"/><path d="M150.3 512.6 V519.1999999999999" stroke="#0c4a94" stroke-width="1.5"/><circle cx="772" cy="515.9" r="8" fill="#a9a9a9"/><path d="M769.1 513.0 L774.9 518.8 M774.9 513.0 L769.1 518.8" stroke="#fff" stroke-width="1.6"/><circle cx="844.8" cy="515.9" r="8" fill="#a9a9a9"/><path d="M841.9 513.0 L847.6999999999999 518.8 M847.6999999999999 513.0 L841.9 518.8" stroke="#fff" stroke-width="1.6"/><circle cx="1164" cy="515.9" r="8" fill="#a9a9a9"/><path d="M1161.1 513.0 L1166.9 518.8 M1166.9 513.0 L1161.1 518.8" stroke="#fff" stroke-width="1.6"/><rect x="31.7" y="536.2" width="13.6" height="13.6" rx="3" fill="#fff" stroke="#d6d6d6" stroke-width="1.1"/><rect x="61.5" y="537.3" width="13.2" height="11.9" rx="1.6" fill="#a3a3a3" stroke="#979797" stroke-width="1"/><rect x="145.5" y="538.6" width="9.6" height="9.6" fill="#f6f6f6" stroke="#cfcfcf" stroke-width="1"/><path d="M147 543.4 H153.6" stroke="#0c4a94" stroke-width="1.5"/><path d="M150.3 540.1 V546.6999999999999" stroke="#0c4a94" stroke-width="1.5"/><circle cx="772" cy="543.4" r="8" fill="#a9a9a9"/><path d="M769.1 540.5 L774.9 546.3 M774.9 540.5 L769.1 546.3" stroke="#fff" stroke-width="1.6"/><circle cx="844.8" cy="543.4" r="8" fill="#a9a9a9"/><path d="M841.9 540.5 L847.6999999999999 546.3 M847.6999999999999 540.5 L841.9 546.3" stroke="#fff" stroke-width="1.6"/><circle cx="1164" cy="543.4" r="8" fill="#a9a9a9"/><path d="M1161.1 540.5 L1166.9 546.3 M1166.9 540.5 L1161.1 546.3" stroke="#fff" stroke-width="1.6"/><rect x="31.7" y="563.7" width="13.6" height="13.6" rx="3" fill="#fff" stroke="#d6d6d6" stroke-width="1.1"/><rect x="61.5" y="564.8" width="13.2" height="11.9" rx="1.6" fill="#a3a3a3" stroke="#979797" stroke-width="1"/><rect x="145.5" y="566.1" width="9.6" height="9.6" fill="#f6f6f6" stroke="#cfcfcf" stroke-width="1"/><path d="M147 570.9 H153.6" stroke="#0c4a94" stroke-width="1.5"/><path d="M150.3 567.6 V574.1999999999999" stroke="#0c4a94" stroke-width="1.5"/><circle cx="772" cy="570.9" r="8" fill="#a9a9a9"/><path d="M769.1 568.0 L774.9 573.8 M774.9 568.0 L769.1 573.8" stroke="#fff" stroke-width="1.6"/><circle cx="844.8" cy="570.9" r="8" fill="#a9a9a9"/><path d="M841.9 568.0 L847.6999999999999 573.8 M847.6999999999999 568.0 L841.9 573.8" stroke="#fff" stroke-width="1.6"/><circle cx="1164" cy="570.9" r="8" fill="#a9a9a9"/><path d="M1161.1 568.0 L1166.9 573.8 M1166.9 568.0 L1161.1 573.8" stroke="#fff" stroke-width="1.6"/></svg><span style="font-size:13.75px;color:#1b1b1b;letter-spacing:-0.084px;left:148.40px;top:7.00px;">2024 Wrzesień</span><span style="font-size:13.75px;color:#1b1b1b;letter-spacing:-0.084px;left:368.10px;top:7.00px;">2024 Wrzesień</span><span style="font-size:13.75px;color:#1b1b1b;letter-spacing:0.569px;left:630.10px;top:8.00px;">*****</span><span style="font-size:13.75px;color:#1b1b1b;letter-spacing:0.082px;left:876.20px;top:7.00px;">2024</span><span style="font-size:13.75px;color:#1b1b1b;letter-spacing:-0.676px;left:930.90px;top:7.00px;">WART</span><span style="font-size:13.75px;color:#1b1b1b;letter-spacing:-0.492px;left:1042.00px;top:7.00px;">KONS10</span><span style="font-size:13.75px;color:#1b1b1b;letter-spacing:0.086px;left:1013.62px;top:7.00px;">10</span><span style="font-size:13.75px;color:#1b1b1b;letter-spacing:-0.036px;left:148.40px;top:35.00px;">2024 Październik</span><span style="font-size:13.75px;color:#1b1b1b;letter-spacing:-0.036px;left:368.10px;top:35.00px;">2024 Październik</span><span style="font-size:13.75px;color:#1b1b1b;letter-spacing:0.569px;left:630.10px;top:36.00px;">*****</span><span style="font-size:13.75px;color:#1b1b1b;letter-spacing:0.082px;left:876.20px;top:35.00px;">2024</span><span style="font-size:13.75px;color:#1b1b1b;letter-spacing:-0.676px;left:930.90px;top:35.00px;">WART</span><span style="font-size:13.75px;color:#1b1b1b;letter-spacing:-0.492px;left:1042.00px;top:35.00px;">KONS10</span><span style="font-size:13.75px;color:#1b1b1b;letter-spacing:0.086px;left:1013.62px;top:35.00px;">10</span><span style="font-size:13.75px;color:#1b1b1b;letter-spacing:0.071px;left:148.40px;top:62.00px;">2024 Listopad</span><span style="font-size:13.75px;color:#1b1b1b;letter-spacing:0.071px;left:368.10px;top:62.00px;">2024 Listopad</span><span style="font-size:13.75px;color:#1b1b1b;letter-spacing:0.569px;left:630.10px;top:63.00px;">*****</span><span style="font-size:13.75px;color:#1b1b1b;letter-spacing:0.082px;left:876.20px;top:62.00px;">2024</span><span style="font-size:13.75px;color:#1b1b1b;letter-spacing:-0.676px;left:930.90px;top:62.00px;">WART</span><span style="font-size:13.75px;color:#1b1b1b;letter-spacing:-0.492px;left:1042.00px;top:62.00px;">KONS10</span><span style="font-size:13.75px;color:#1b1b1b;letter-spacing:0.086px;left:1013.62px;top:62.00px;">10</span><span style="font-size:13.75px;color:#1b1b1b;letter-spacing:-0.113px;left:148.40px;top:90.00px;">2024 Grudzień</span><span style="font-size:13.75px;color:#1b1b1b;letter-spacing:-0.113px;left:368.10px;top:90.00px;">2024 Grudzień</span><span style="font-size:13.75px;color:#1b1b1b;letter-spacing:0.569px;left:630.10px;top:91.00px;">*****</span><span style="font-size:13.75px;color:#1b1b1b;letter-spacing:0.082px;left:876.20px;top:90.00px;">2024</span><span style="font-size:13.75px;color:#1b1b1b;letter-spacing:-0.676px;left:930.90px;top:90.00px;">WART</span><span style="font-size:13.75px;color:#1b1b1b;letter-spacing:-0.492px;left:1042.00px;top:90.00px;">KONS10</span><span style="font-size:13.75px;color:#1b1b1b;letter-spacing:0.086px;left:1013.62px;top:90.00px;">10</span><span style="font-size:13.75px;color:#1b1b1b;letter-spacing:-0.096px;left:1238.70px;top:90.00px;">2024-12-18 10:50:42</span><span style="font-size:13.75px;color:#1b1b1b;letter-spacing:-0.251px;left:173.40px;top:117.00px;">Sprawozdanie: BILANS_1</span><span style="font-size:13.75px;color:#1b1b1b;letter-spacing:0.017px;left:368.10px;top:117.00px;">Bilans (obowiązuje od 2016)</span><span style="font-size:13.75px;color:#1b1b1b;letter-spacing:-0.438px;left:630.10px;top:117.00px;">BILANS_1</span><span style="font-size:13.75px;color:#1b1b1b;letter-spacing:0.082px;left:876.20px;top:117.00px;">2024</span><span style="font-size:13.75px;color:#1b1b1b;letter-spacing:-0.676px;left:930.90px;top:117.00px;">WART</span><span style="font-size:13.75px;color:#1b1b1b;letter-spacing:-0.492px;left:1042.00px;top:117.00px;">KONS10</span><span style="font-size:13.75px;color:#1b1b1b;letter-spacing:0.086px;left:1013.62px;top:117.00px;">10</span><span style="font-size:13.75px;color:#1b1b1b;letter-spacing:-0.096px;left:1238.70px;top:117.00px;">2024-12-18 10:50:42</span><span style="font-size:13.75px;color:#1b1b1b;letter-spacing:-0.426px;left:198.70px;top:145.00px;">10_2024_WART</span><span style="font-size:13.75px;color:#1b1b1b;letter-spacing:-0.191px;left:368.10px;top:145.00px;">Firma: 10 Wersja: 2024 Wymiar: WART</span><span style="font-size:13.75px;color:#1b1b1b;letter-spacing:-0.438px;left:630.10px;top:145.00px;">BILANS_1</span><span style="font-size:13.75px;color:#1b1b1b;letter-spacing:0.082px;left:876.20px;top:145.00px;">2024</span><span style="font-size:13.75px;color:#1b1b1b;letter-spacing:-0.676px;left:930.90px;top:145.00px;">WART</span><span style="font-size:13.75px;color:#1b1b1b;letter-spacing:-0.492px;left:1042.00px;top:145.00px;">KONS10</span><span style="font-size:13.75px;color:#1b1b1b;letter-spacing:0.086px;left:1013.62px;top:145.00px;">10</span><span style="font-size:13.75px;color:#1b1b1b;letter-spacing:0.052px;left:1190.60px;top:145.00px;">jzg</span><span style="font-size:13.75px;color:#1b1b1b;letter-spacing:-0.096px;left:1238.70px;top:145.00px;">2024-12-18 10:50:42</span><span style="font-size:13.75px;color:#1b1b1b;letter-spacing:-0.188px;left:173.40px;top:172.00px;">Sprawozdanie: ZMKAPITAL_1</span><span style="font-size:13.75px;color:#1b1b1b;letter-spacing:0.044px;left:368.10px;top:172.00px;">Zestawienie zmian w kapitale (funduszu)</span><span style="font-size:13.75px;color:#1b1b1b;letter-spacing:-0.240px;left:630.10px;top:172.00px;">ZMKAPITAL_1</span><span style="font-size:13.75px;color:#1b1b1b;letter-spacing:0.082px;left:876.20px;top:172.00px;">2024</span><span style="font-size:13.75px;color:#1b1b1b;letter-spacing:-0.676px;left:930.90px;top:172.00px;">WART</span><span style="font-size:13.75px;color:#1b1b1b;letter-spacing:-0.492px;left:1042.00px;top:172.00px;">KONS10</span><span style="font-size:13.75px;color:#1b1b1b;letter-spacing:0.086px;left:1013.62px;top:172.00px;">10</span><span style="font-size:13.75px;color:#1b1b1b;letter-spacing:-0.146px;left:123.40px;top:200.00px;">Cash Flow</span><span style="font-size:13.75px;color:#1b1b1b;letter-spacing:-0.146px;left:368.10px;top:200.00px;">Cash Flow</span><span style="font-size:13.75px;color:#1b1b1b;letter-spacing:-0.729px;left:630.10px;top:200.00px;">PRZEPP_1</span><span style="font-size:13.75px;color:#1b1b1b;letter-spacing:0.082px;left:876.20px;top:200.00px;">2024</span><span style="font-size:13.75px;color:#1b1b1b;letter-spacing:-0.676px;left:930.90px;top:200.00px;">WART</span><span style="font-size:13.75px;color:#1b1b1b;letter-spacing:-0.492px;left:1042.00px;top:200.00px;">KONS10</span><span style="font-size:13.75px;color:#1b1b1b;letter-spacing:0.086px;left:1013.62px;top:200.00px;">10</span><span style="font-size:13.75px;color:#1b1b1b;letter-spacing:-0.094px;left:148.40px;top:227.00px;">2024 Styczeń</span><span style="font-size:13.75px;color:#1b1b1b;letter-spacing:-0.094px;left:368.10px;top:227.00px;">2024 Styczeń</span><span style="font-size:13.75px;color:#1b1b1b;letter-spacing:-0.729px;left:630.10px;top:227.00px;">PRZEPP_1</span><span style="font-size:13.75px;color:#1b1b1b;letter-spacing:0.082px;left:876.20px;top:227.00px;">2024</span><span style="font-size:13.75px;color:#1b1b1b;letter-spacing:-0.676px;left:930.90px;top:227.00px;">WART</span><span style="font-size:13.75px;color:#1b1b1b;letter-spacing:-0.492px;left:1042.00px;top:227.00px;">KONS10</span><span style="font-size:13.75px;color:#1b1b1b;letter-spacing:0.086px;left:1013.62px;top:227.00px;">10</span><span style="font-size:13.75px;color:#1b1b1b;letter-spacing:-0.043px;left:148.40px;top:255.00px;">2024 Luty</span><span style="font-size:13.75px;color:#1b1b1b;letter-spacing:-0.043px;left:368.10px;top:255.00px;">2024 Luty</span><span style="font-size:13.75px;color:#1b1b1b;letter-spacing:-0.729px;left:630.10px;top:255.00px;">PRZEPP_1</span><span style="font-size:13.75px;color:#1b1b1b;letter-spacing:0.082px;left:876.20px;top:255.00px;">2024</span><span style="font-size:13.75px;color:#1b1b1b;letter-spacing:-0.676px;left:930.90px;top:255.00px;">WART</span><span style="font-size:13.75px;color:#1b1b1b;letter-spacing:-0.492px;left:1042.00px;top:255.00px;">KONS10</span><span style="font-size:13.75px;color:#1b1b1b;letter-spacing:0.086px;left:1013.62px;top:255.00px;">10</span><span style="font-size:13.75px;color:#1b1b1b;letter-spacing:0.016px;left:148.40px;top:282.00px;">2024 Marzec</span><span style="font-size:13.75px;color:#1b1b1b;letter-spacing:0.016px;left:368.10px;top:282.00px;">2024 Marzec</span><span style="font-size:13.75px;color:#1b1b1b;letter-spacing:-0.729px;left:630.10px;top:282.00px;">PRZEPP_1</span><span style="font-size:13.75px;color:#1b1b1b;letter-spacing:0.082px;left:876.20px;top:282.00px;">2024</span><span style="font-size:13.75px;color:#1b1b1b;letter-spacing:-0.676px;left:930.90px;top:282.00px;">WART</span><span style="font-size:13.75px;color:#1b1b1b;letter-spacing:-0.492px;left:1042.00px;top:282.00px;">KONS10</span><span style="font-size:13.75px;color:#1b1b1b;letter-spacing:0.086px;left:1013.62px;top:282.00px;">10</span><span style="font-size:13.75px;color:#1b1b1b;letter-spacing:-0.040px;left:148.40px;top:310.00px;">2024 Kwiecień</span><span style="font-size:13.75px;color:#1b1b1b;letter-spacing:-0.040px;left:368.10px;top:310.00px;">2024 Kwiecień</span><span style="font-size:13.75px;color:#1b1b1b;letter-spacing:-0.729px;left:630.10px;top:310.00px;">PRZEPP_1</span><span style="font-size:13.75px;color:#1b1b1b;letter-spacing:0.082px;left:876.20px;top:310.00px;">2024</span><span style="font-size:13.75px;color:#1b1b1b;letter-spacing:-0.676px;left:930.90px;top:310.00px;">WART</span><span style="font-size:13.75px;color:#1b1b1b;letter-spacing:-0.492px;left:1042.00px;top:310.00px;">KONS10</span><span style="font-size:13.75px;color:#1b1b1b;letter-spacing:0.086px;left:1013.62px;top:310.00px;">10</span><span style="font-size:13.75px;color:#1b1b1b;letter-spacing:0.066px;left:148.40px;top:337.00px;">2024 Maj</span><span style="font-size:13.75px;color:#1b1b1b;letter-spacing:0.066px;left:368.10px;top:337.00px;">2024 Maj</span><span style="font-size:13.75px;color:#1b1b1b;letter-spacing:-0.729px;left:630.10px;top:337.00px;">PRZEPP_1</span><span style="font-size:13.75px;color:#1b1b1b;letter-spacing:0.082px;left:876.20px;top:337.00px;">2024</span><span style="font-size:13.75px;color:#1b1b1b;letter-spacing:-0.676px;left:930.90px;top:337.00px;">WART</span><span style="font-size:13.75px;color:#1b1b1b;letter-spacing:-0.492px;left:1042.00px;top:337.00px;">KONS10</span><span style="font-size:13.75px;color:#1b1b1b;letter-spacing:0.086px;left:1013.62px;top:337.00px;">10</span><span style="font-size:13.75px;color:#1b1b1b;letter-spacing:-0.056px;left:148.40px;top:365.00px;">2024 Czerwiec</span><span style="font-size:13.75px;color:#1b1b1b;letter-spacing:-0.056px;left:368.10px;top:365.00px;">2024 Czerwiec</span><span style="font-size:13.75px;color:#1b1b1b;letter-spacing:-0.729px;left:630.10px;top:365.00px;">PRZEPP_1</span><span style="font-size:13.75px;color:#1b1b1b;letter-spacing:0.082px;left:876.20px;top:365.00px;">2024</span><span style="font-size:13.75px;color:#1b1b1b;letter-spacing:-0.676px;left:930.90px;top:365.00px;">WART</span><span style="font-size:13.75px;color:#1b1b1b;letter-spacing:-0.492px;left:1042.00px;top:365.00px;">KONS10</span><span style="font-size:13.75px;color:#1b1b1b;letter-spacing:0.086px;left:1013.62px;top:365.00px;">10</span></div>
<div style="left:0;top:0;width:1440px;height:625px;z-index:8;will-change:transform"><span style="font-size:17px;color:#e4f0f8;letter-spacing:-0.258px;left:7.80px;top:7.00px;z-index:5;-webkit-text-stroke:0.45px #e4f0f8;">softlab anywhere</span><span style="font-size:9.8px;color:#c4e6f8;letter-spacing:-0.928px;font-weight:700;left:308.40px;top:16.00px;z-index:5;-webkit-text-stroke:0.15px #c4e6f8;">BC</span><span style="font-size:15px;color:#fff;letter-spacing:-0.500px;font-weight:700;left:355.20px;top:9.00px;z-index:5;">Otwórz w HTML</span><span style="font-size:13.75px;color:#0b77b8;letter-spacing:-0.128px;left:646.60px;top:10.00px;">Wyszukaj (Alt + Q)</span><span style="font-size:13.75px;color:#fff;letter-spacing:-0.156px;left:1045.00px;top:9.00px;-webkit-text-stroke:0.3px #fff;">10 - Spółka matka S.A.</span><span style="font-size:12.2px;color:#fff;letter-spacing:-0.581px;left:1233.30px;top:10.00px;">?</span><span style="font-size:13.75px;color:#1b1b1b;letter-spacing:0.044px;left:73.50px;top:48.00px;-webkit-mask-image:linear-gradient(90deg,#000 0,#000 200px,rgba(0,0,0,.55) 212px,rgba(0,0,0,.12) 232px,transparent 238px);">Sprawozdania finansowe –  w formie d</span><span style="font-size:13.75px;color:#1b1b1b;letter-spacing:0.053px;left:106.70px;top:86.00px;">Status</span><span style="font-size:13.75px;color:#1b1b1b;letter-spacing:0.010px;left:277.20px;top:86.00px;">Wyświetl sprawozdanie</span><span style="font-size:13.75px;color:#1b1b1b;letter-spacing:0.097px;left:463.70px;top:86.00px;">Wylicz wartości</span><span style="font-size:13.75px;color:#6a6a6a;letter-spacing:-0.408px;left:33.30px;top:123.00px;">Grupa:</span><span style="font-size:13.75px;color:#2a2a2a;letter-spacing:-0.645px;left:77.20px;top:123.00px;-webkit-text-stroke:0.25px #2a2a2a;">WSZYSTKO</span><span style="font-size:13.75px;color:#6a6a6a;letter-spacing:-0.069px;left:175.70px;top:123.00px;">Rok obrotowy:</span><span style="font-size:13.75px;color:#2a2a2a;letter-spacing:0.202px;left:265.90px;top:123.00px;-webkit-text-stroke:0.25px #2a2a2a;">2024</span><span style="font-size:13.75px;color:#6a6a6a;letter-spacing:0.089px;left:343.70px;top:123.00px;">Wartości:</span><span style="font-size:13.75px;color:#2a2a2a;letter-spacing:0.241px;left:404.80px;top:123.00px;-webkit-text-stroke:0.25px #2a2a2a;">wszystkie</span><span style="font-size:13.75px;color:#222;letter-spacing:-0.022px;left:86.90px;top:154.00px;-webkit-text-stroke:0.4px #222;">Ścieżka</span><span style="font-size:13.75px;color:#222;letter-spacing:-0.641px;font-weight:700;left:385.00px;top:154.00px;">Opis</span><span style="font-size:13.75px;color:#222;letter-spacing:-0.055px;left:647.80px;top:154.00px;-webkit-text-stroke:0.25px #222;">Sprawozdanie</span><span style="font-size:13.75px;color:#222;letter-spacing:0.036px;left:647.80px;top:178.00px;-webkit-text-stroke:0.25px #222;">Symbol</span><span style="font-size:13.75px;color:#222;letter-spacing:0.107px;left:746.60px;top:178.00px;-webkit-text-stroke:0.25px #222;">Status</span><span style="font-size:13.75px;color:#222;letter-spacing:0.091px;left:802.70px;top:154.00px;-webkit-text-stroke:0.25px #222;">Konsolidacja</span><span style="font-size:13.75px;color:#222;letter-spacing:-0.081px;left:893.40px;top:154.00px;-webkit-text-stroke:0.25px #222;">Wersja</span><span style="font-size:13.75px;color:#222;letter-spacing:0.023px;left:947.70px;top:154.00px;-webkit-text-stroke:0.25px #222;">Wymiar</span><span style="font-size:13.75px;color:#222;letter-spacing:0.095px;left:1007.40px;top:154.00px;-webkit-text-stroke:0.25px #222;">Firma źródłowa</span><span style="font-size:13.75px;color:#222;letter-spacing:0.059px;left:1059.70px;top:178.00px;-webkit-text-stroke:0.25px #222;">Logo</span><span style="font-size:13.75px;color:#222;letter-spacing:0.014px;left:1124.70px;top:154.00px;-webkit-text-stroke:0.25px #222;">Ostatnie naliczenie danych</span><span style="font-size:13.75px;color:#222;letter-spacing:0.115px;left:1124.70px;top:178.00px;-webkit-text-stroke:0.25px #222;">Naliczono</span><span style="font-size:13.75px;color:#222;letter-spacing:-0.203px;left:1207.40px;top:178.00px;-webkit-text-stroke:0.25px #222;">Osoba</span><span style="font-size:13.75px;color:#222;letter-spacing:-0.164px;left:1256.10px;top:178.00px;-webkit-text-stroke:0.25px #222;">Data</span><span style="font-size:13.75px;color:#222;letter-spacing:0.069px;left:1007.40px;top:178.00px;width:41.5px;overflow:hidden;-webkit-text-stroke:0.25px #222;">Numer</span><span style="font-size:13.75px;color:#2c2c2c;letter-spacing:0.153px;left:65.40px;top:596.00px;-webkit-mask-image:linear-gradient(90deg,#000 0,#000 300px,rgba(0,0,0,.5) 318px,rgba(0,0,0,.15) 345px,transparent 360px);">Historia asynchronicznych wyliczeń wartości sprawozdań</span><span style="font-size:13.75px;color:#505050;letter-spacing:0.196px;left:464.90px;top:596.00px;-webkit-mask-image:linear-gradient(90deg,#000 0,#000 150px,rgba(0,0,0,.55) 164px,rgba(0,0,0,.15) 181px);-webkit-text-stroke:0.15px #505050;">Administracja uprawnieniami</span></div>
</body></html>
